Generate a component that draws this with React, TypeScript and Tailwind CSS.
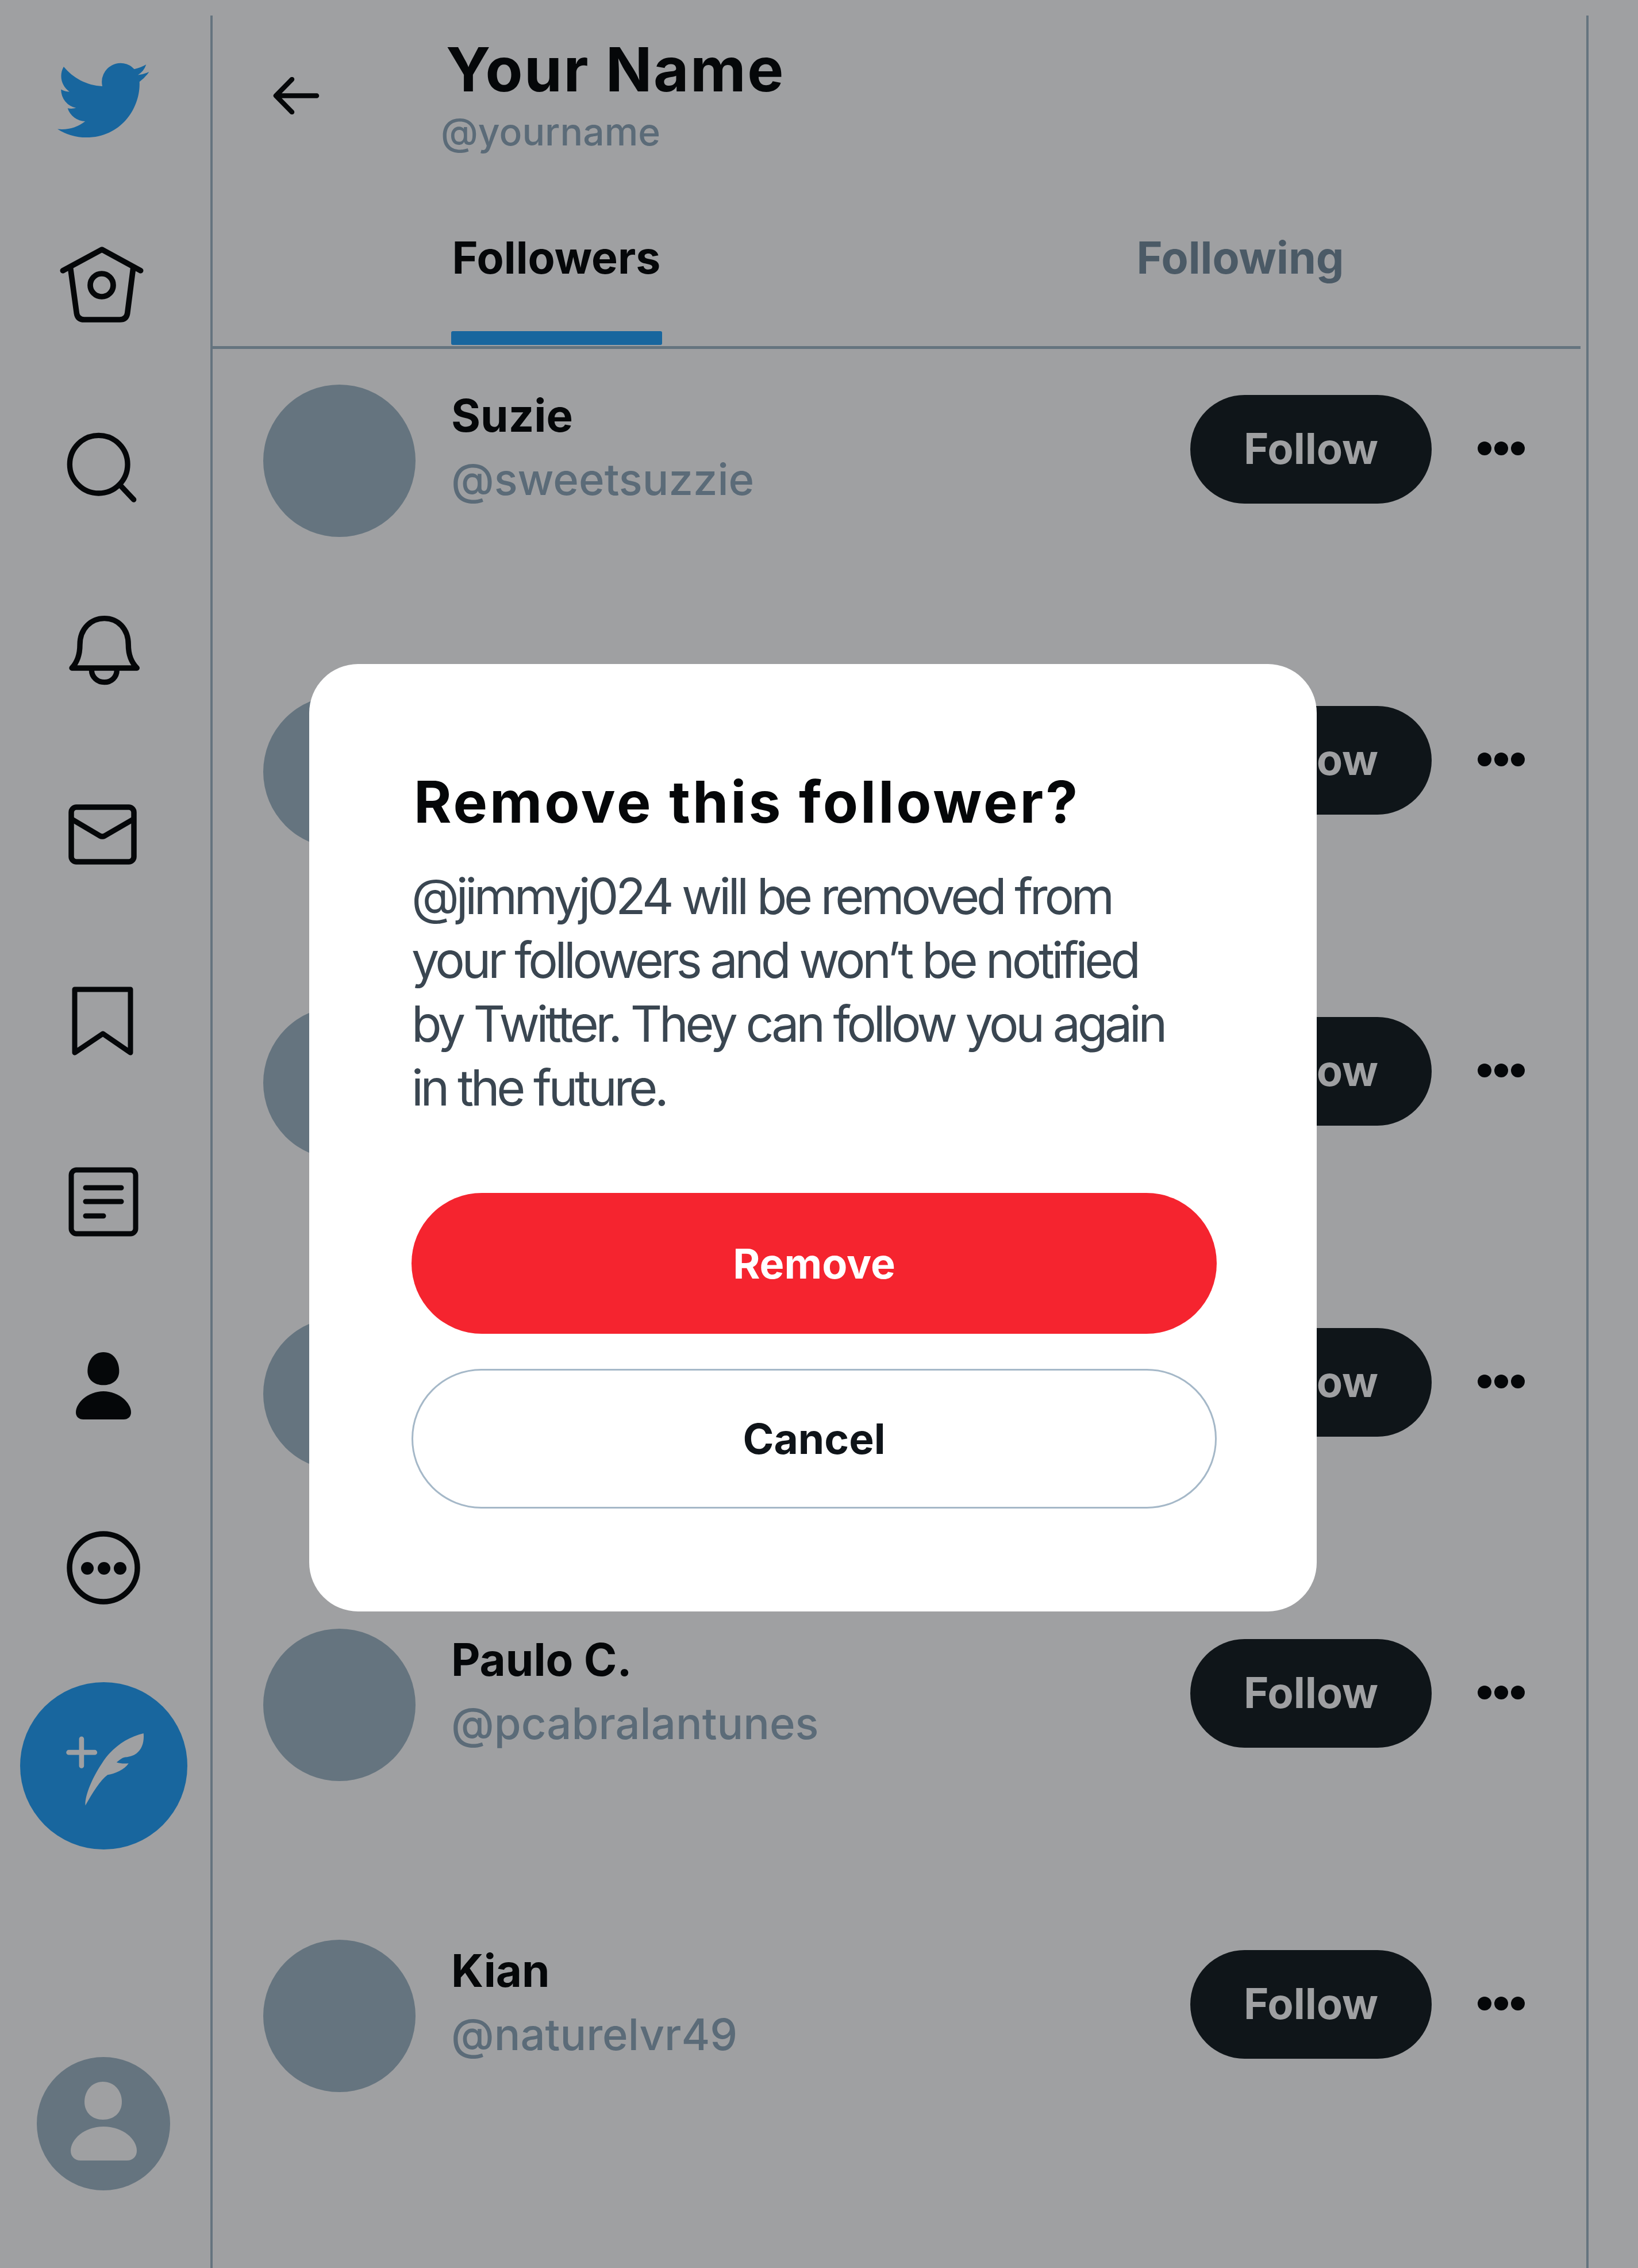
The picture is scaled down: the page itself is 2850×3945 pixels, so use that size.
import React from 'react';

const rows = [
  { name: 'Suzie', handle: '@sweetsuzzie' },
  { name: '', handle: '' },
  { name: '', handle: '' },
  { name: '', handle: '' },
  { name: 'Paulo C.', handle: '@pcabralantunes' },
  { name: 'Kian', handle: '@naturelvr49' },
];

const Bird = () => (
  <svg width="180" height="180" viewBox="0 0 180 180">
    <path
      transform="translate(10 14) scale(6.625)"
      fill="#18669e"
      d="M23.953 4.57a10 10 0 01-2.825.775 4.958 4.958 0 002.163-2.723c-.951.555-2.005.959-3.127 1.184a4.92 4.92 0 00-8.384 4.482C7.69 8.095 4.067 6.13 1.64 3.162a4.822 4.822 0 00-.666 2.475c0 1.71.87 3.213 2.188 4.096a4.904 4.904 0 01-2.228-.616v.06a4.923 4.923 0 003.946 4.827 4.996 4.996 0 01-2.212.085 4.936 4.936 0 004.604 3.417 9.867 9.867 0 01-6.102 2.105c-.39 0-.779-.023-1.17-.067a13.995 13.995 0 007.557 2.209c9.053 0 13.998-7.496 13.998-13.985 0-.21 0-.42-.015-.63A9.935 9.935 0 0024 4.59z"
    />
  </svg>
);

const HomeIcon = () => (
  <svg width="180" height="180" viewBox="0 0 540 540" fill="none" stroke="#050709" strokeWidth="29" strokeLinecap="round" strokeLinejoin="round">
    <path d="M58 182L262 72L464 182" />
    <path d="M98 170L130 405Q135 438 170 438H355Q390 438 395 405L425 170" />
    <circle cx="261" cy="258" r="60" />
  </svg>
);

const SearchIcon = () => (
  <svg width="180" height="180" viewBox="0 0 540 540" fill="none" stroke="#050709" strokeWidth="28" strokeLinecap="round">
    <circle cx="245" cy="233" r="151" />
    <path d="M360 345L428 417" />
  </svg>
);

const BellIcon = () => (
  <svg width="180" height="180" viewBox="0 0 540 540" fill="none" stroke="#050709" strokeWidth="28" strokeLinecap="round" strokeLinejoin="round">
    <path d="M105 336Q147 290 147 215C147 130 205 77 275 77C345 77 400 130 400 215Q400 290 445 336Z" />
    <path d="M208 345C208 385 240 410 275 410C310 410 340 385 340 345" />
  </svg>
);

const MailIcon = () => (
  <svg width="180" height="180" viewBox="0 0 180 180" fill="none" stroke="#050709" strokeWidth="9.5" strokeLinecap="round" strokeLinejoin="round">
    <rect x="34" y="44" width="109" height="95" rx="9" />
    <path d="M35 65L84 94Q88 96 92 94L142 65" />
  </svg>
);

const BookmarkIcon = () => (
  <svg width="180" height="180" viewBox="0 0 180 180" fill="none" stroke="#050709" strokeWidth="9" strokeLinejoin="round">
    <path d="M40 31H137V141L89 108L40 141Z" />
  </svg>
);

const ListIcon = () => (
  <svg width="180" height="180" viewBox="0 0 180 180" fill="none" stroke="#050709" strokeWidth="9" strokeLinecap="round">
    <rect x="34" y="35" width="112" height="111" rx="9" />
    <path d="M59 66H121M59 90H121M59 115H90" />
  </svg>
);

const PersonIcon = () => (
  <svg width="180" height="180" viewBox="0 0 540 540" fill="#050709">
    <path d="M270 96C325 96 352 145 352 195C352 240 318 268 270 268C222 268 187 240 187 195C187 145 215 96 270 96Z" />
    <path d="M270 300C350 300 414 360 414 410C414 432 398 447 375 447H165C142 447 126 432 126 410C126 360 190 300 270 300Z" />
  </svg>
);

const MoreIcon = () => (
  <svg width="180" height="180" viewBox="0 0 180 180">
    <circle cx="90" cy="90" r="59" fill="none" stroke="#050709" strokeWidth="9.5" />
    <circle cx="62" cy="91" r="11" fill="#050709" />
    <circle cx="91" cy="91" r="11" fill="#050709" />
    <circle cx="119" cy="91" r="11" fill="#050709" />
  </svg>
);

const ComposeIcon = () => (
  <svg width="291" height="291" viewBox="41 78 874 874">
    <path d="M295 445H431M362 375V515" fill="none" stroke="#9fa0a2" strokeWidth="26" strokeLinecap="round" />
    <path fill="#9fa0a2" d="M382 722C378 680 410 590 470 500C520 420 600 365 686 345C692 410 665 465 590 470C575 472 560 485 545 497C570 505 590 503 608 502C585 535 540 555 498 562C460 590 420 655 382 722Z" />
  </svg>
);

const AvatarIcon = () => (
  <svg width="232" height="232" viewBox="0 0 232 232" fill="#9fa0a2">
    <path d="M115 43C136 43 148 60 148 78C148 97 134 109 115 109C97 109 83 97 83 78C83 60 95 43 115 43Z" />
    <path d="M116 121C150 121 174 143 174 163C174 173 167 180 157 180H76C66 180 59 173 59 163C59 143 83 121 116 121Z" />
  </svg>
);

const Sidebar = () => (
  <aside className="w-[360px] mr-[6px] shrink-0 flex flex-col items-center pt-[81px]">
    <Bird />
    <div className="mt-[149px]"><HomeIcon /></div>
    <div className="mt-[140px]"><SearchIcon /></div>
    <div className="mt-[140px]"><BellIcon /></div>
    <div className="mt-[130px]"><MailIcon /></div>
    <div className="mt-[150px]"><BookmarkIcon /></div>
    <div className="mt-[130px]"><ListIcon /></div>
    <div className="mt-[140px]"><PersonIcon /></div>
    <div className="mt-[137px]"><MoreIcon /></div>
    <div className="mt-[109px] w-[291px] h-[291px] rounded-full bg-[#18669e]"><ComposeIcon /></div>
    <div className="mt-[361px] w-[232px] h-[232px] rounded-full bg-[#65747f]"><AvatarIcon /></div>
  </aside>
);

const Row = ({ name, handle }: { name: string; handle: string }) => (
  <div className="h-[541px] flex items-start pl-[88px]">
    <div className="w-[265px] h-[265px] mt-[62px] rounded-full bg-[#65747f] shrink-0" />
    <div className="flex-1 ml-[62px] mt-[61px]">
      <div className="h-[110px] text-[78px] leading-[110px] font-bold text-[#050709]">{name}</div>
      <div className="h-[110px] text-[76px] leading-[110px] font-medium text-[#5b6b78]">{handle}</div>
    </div>
    <button className="w-[420px] h-[189px] mt-[80px] pb-[2px] rounded-full bg-[#0f1519] text-[#9fa0a2] text-[74px] font-bold">
      Follow
    </button>
    <svg width="82" height="24" viewBox="0 0 82 24" fill="#050709" className="mt-[161px] ml-[80px] mr-[107px]">
      <circle cx="12" cy="12" r="12" />
      <circle cx="41" cy="12" r="12" />
      <circle cx="70" cy="12" r="12" />
    </svg>
  </div>
);

const Dialog = () => (
  <div className="absolute left-[538px] top-[1155px] w-[1753px] h-[1648px] rounded-[85px] bg-white pt-[180px] pl-[178px]">
    <h2 className="ml-[4px] text-[100px] leading-[120px] font-bold tracking-[4px] text-[#050709]">Remove this follower?</h2>
    <p className="mt-[49px] text-[86px] leading-[111px] tracking-[-5.3px] text-[#3a4651]">
      @jimmyj024 will be removed from
      <br />
      your followers and won’t be notified
      <br />
      by Twitter. They can follow you again
      <br />
      in the future.
    </p>
    <button className="block mt-[127px] w-[1401px] h-[245px] rounded-full bg-[#f5242f] text-white text-[72px] font-bold">
      Remove
    </button>
    <button className="block mt-[61px] w-[1401px] h-[243px] rounded-full border-[3px] border-[#a5b8c8] bg-white text-[#0f1419] text-[73px] font-bold">
      Cancel
    </button>
  </div>
);

export default function App() {
  return (
    <div className="relative w-[2850px] h-[3945px] overflow-hidden bg-[#9fa0a2] font-[Inter,sans-serif] flex">
      <Sidebar />
      <main className="mt-[27px] w-[2398px] border-x-4 border-[#65747f]">
        <header className="h-[575px] relative flex items-start">
          <svg width="81" height="65" viewBox="0 0 81 65" fill="none" stroke="#050709" strokeWidth="8.5" strokeLinecap="round" strokeLinejoin="round" className="mt-[107px] ml-[105px]">
            <path d="M76 32.5H6M33 4L5 32.5L33 61" />
          </svg>
          <div className="ml-[220px] mt-[39px]">
            <h1 className="text-[106px] leading-[110px] font-bold tracking-[2.5px] text-[#050709]">Your Name</h1>
            <div className="-ml-[9px] mt-[13px] text-[66px] leading-[80px] font-medium text-[#5b6b78]">@yourname</div>
          </div>
          <nav className="absolute left-[3px] right-[7px] top-[366px] grid grid-cols-2 text-[77px] leading-[110px] font-bold text-center">
            <div className="flex flex-col items-center">
              <span className="text-[#050709]">Followers</span>
              <span className="mt-[73px] w-[367px] h-[24px] rounded-[3px] bg-[#18669e]" />
            </div>
            <span className="text-[#4b5a66]">Following</span>
          </nav>
        </header>
        <div className="h-[5px] mr-[10px] bg-[#65747f]" />
        {rows.map((r, i) => (
          <Row key={i} name={r.name} handle={r.handle} />
        ))}
      </main>
      <Dialog />
    </div>
  );
}
